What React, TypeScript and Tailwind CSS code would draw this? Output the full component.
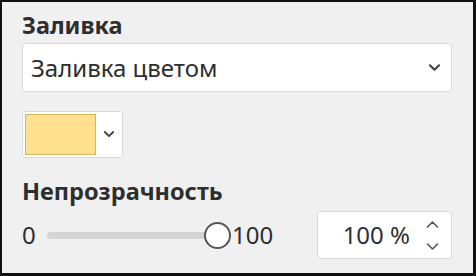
import React from 'react';

const Chevron: React.FC<{ up?: boolean; thin?: boolean; className?: string }> = ({ up, thin, className }) => (
  <svg viewBox="0 0 12 8" className={className} fill="none">
    <polyline
      points={up ? '1,7 6,2 11,7' : '1,1 6,6 11,1'}
      stroke="currentColor"
      strokeWidth={thin ? 1.6 : 2.3}
      strokeLinecap="round"
      strokeLinejoin="round"
    />
  </svg>
);

const App: React.FC = () => {
  return (
    <div
      className="w-[476px] h-[276px] bg-[#f0f0f0] border-t-2 border-l-2 border-r-[3px] border-b-[3px] border-[#111] pl-[20px] pr-[21px] pt-[10px] flex flex-col text-[#2e2e2e]"
      style={{ fontFamily: '"Noto Sans", "Open Sans", sans-serif' }}
    >
      {/* Fill */}
      <div className="h-[26px] text-[23.5px] leading-[26px] font-bold">Заливка</div>
      <div className="mt-[5px] h-[49px] bg-white border border-[#d9d9d9] rounded-[3px] flex items-center pl-[8px] pr-[11px]">
        <span className="text-[24px] leading-[30px] flex-1">Заливка цветом</span>
        <Chevron className="w-[11px] h-[8px] text-[#444]" />
      </div>

      {/* Colour picker */}
      <div className="mt-[19px] w-[101px] h-[47px] bg-white border border-[#d9d9d9] rounded-[3px] flex items-center pl-[2px]">
        <div className="w-[71px] h-[41px] bg-[#ffe08f] border border-[#d4b461]" />
        <Chevron className="ml-[8px] w-[10px] h-[7px] text-[#444]" />
      </div>

      {/* Opacity */}
      <div className="mt-[20px] h-[26px] text-[23.5px] leading-[26px] font-bold">Непрозрачность</div>
      <div className="mt-[7px] flex items-center">
        <span className="text-[24px] leading-[30px] w-[25px]">0</span>
        <div className="w-[170px] h-[7px] bg-[#d4d4d4] rounded-full" />
        <div className="-ml-[13px] w-[27px] h-[27px] rounded-full bg-white border-2 border-[#555]" />
        <span className="text-[24px] leading-[30px] ml-[1px]">100</span>
        <div className="ml-auto w-[135px] h-[48px] bg-white border border-[#d9d9d9] rounded-[3px] flex items-center pr-[12px]">
          <span className="text-[24px] leading-[30px] flex-1 text-right pr-[16px]">100 %</span>
          <div className="flex flex-col gap-[15px]">
            <Chevron up thin className="w-[13px] h-[8px] text-[#555]" />
            <Chevron thin className="w-[13px] h-[8px] text-[#555]" />
          </div>
        </div>
      </div>
    </div>
  );
};

export default App;
